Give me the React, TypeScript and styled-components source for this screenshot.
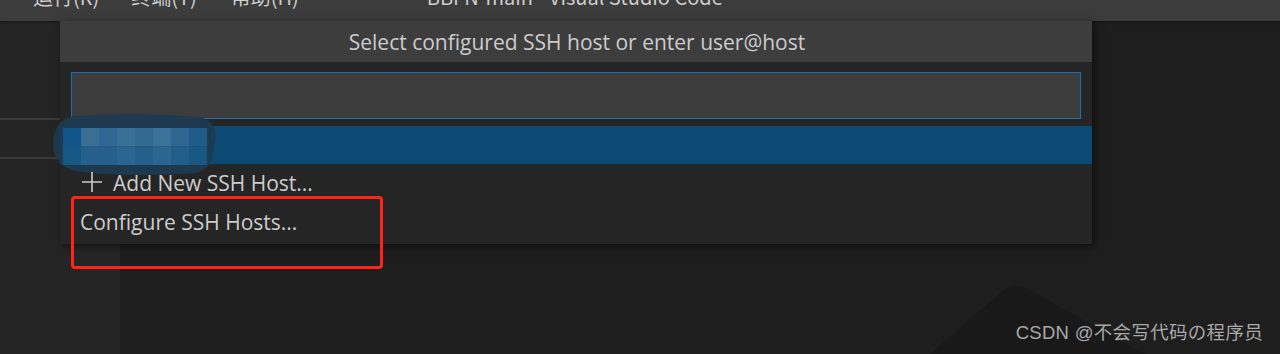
import styled, { createGlobalStyle } from "styled-components";

const Global = createGlobalStyle`
  html, body {
    margin: 0;
    padding: 0;
    background: #1e1e1e;
    overflow: hidden;
  }
`;

const Window = styled.div`
  position: relative;
  width: 1280px;
  height: 354px;
  display: grid;
  grid-template-rows: 21px 1fr;
  font-family: "Open Sans", "Noto Sans", sans-serif;
  overflow: hidden;
`;

const TitleBar = styled.div`
  background: #3c3c3c;
  display: flex;
  overflow: hidden;
  color: #cccccc;
  font-family: "Noto Sans CJK SC", "Open Sans", sans-serif;
  font-size: 20px;
  line-height: 20px;
  box-shadow: 0 1px 3px rgba(0, 0, 0, 0.4);
  z-index: 1;
`;

const MenuItem = styled.span<{ $gap: number }>`
  margin-top: -13px;
  margin-left: ${(p) => p.$gap}px;
  white-space: nowrap;
`;

const Body = styled.div`
  display: grid;
  grid-template-columns: 120px 1fr;
`;

const Sidebar = styled.div`
  background: #252526;
  display: flex;
  flex-direction: column;
  padding-top: 97px;
`;

const SideRow = styled.div`
  height: 37px;
  border-top: 2px solid #3a3a3a;
`;

const Editor = styled.div`
  position: relative;
  background: #1e1e1e;
`;

const LogoShape = styled.svg`
  position: absolute;
  left: 810px;
  bottom: 0;
`;

const QuickPick = styled.div`
  position: absolute;
  left: 60px;
  top: 21px;
  width: 1032px;
  height: 223px;
  background: #252526;
  box-shadow: 2px 2px 8px rgba(0, 0, 0, 0.55);
  display: flex;
  flex-direction: column;
  z-index: 2;
`;

const Header = styled.div`
  height: 41px;
  background: #3d3d3d;
  color: #cccccc;
  font-size: 21px;
  display: flex;
  align-items: center;
  justify-content: center;
  padding-left: 2px;
`;

const InputBox = styled.div`
  margin: 10px 11px 0 11px;
  height: 45px;
  background: #3c3c3c;
  border: 1px solid #1a70b3;
`;

const List = styled.div`
  margin-top: 7px;
  display: flex;
  flex-direction: column;
`;

const Row = styled.div<{ $selected?: boolean }>`
  position: relative;
  height: ${(p) => (p.$selected ? 38 : 37)}px;
  background: ${(p) => (p.$selected ? "#0b4a73" : "transparent")};
  display: flex;
  align-items: center;
  gap: 11px;
  padding-left: ${(p) => (p.$selected ? 20 : 22)}px;
  color: #cccccc;
  font-size: 21px;
  white-space: nowrap;
`;

const ConfigureRow = styled(Row)`
  padding-left: 20px;
  padding-top: 2px;
`;

const Redacted = styled.svg`
  position: absolute;
  left: -8px;
  top: -13px;
`;

const Plus = styled.svg`
  flex: none;
  margin-top: -1px;
`;

const Annotation = styled.div`
  position: absolute;
  left: 71px;
  top: 196px;
  width: 306px;
  height: 67px;
  border: 3px solid #ff2416;
  border-radius: 4px;
  z-index: 3;
`;

const Watermark = styled.div`
  position: absolute;
  right: 17px;
  bottom: 10px;
  color: #a8a8a8;
  font-family: "Liberation Sans", "Noto Sans CJK SC", sans-serif;
  font-size: 18.5px;
  letter-spacing: 0.3px;
  z-index: 3;
`;

const pixels = [
  ["#12558a", "#3a6f95", "#2f6892", "#3a7097", "#326a92", "#3b7299", "#2d6690", "#1f5c89"],
  ["#165886", "#265f8a", "#24608b", "#2b6590", "#24608b", "#2b6590", "#215e89", "#195784"],
];

export default function App() {
  return (
    <Window>
      <Global />
      <TitleBar>
        <MenuItem $gap={33}>运行(R)</MenuItem>
        <MenuItem $gap={32}>终端(T)</MenuItem>
        <MenuItem $gap={34}>帮助(H)</MenuItem>
        <MenuItem $gap={128}>BBFN-main - Visual Studio Code</MenuItem>
      </TitleBar>
      <Body>
        <Sidebar>
          <SideRow />
          <SideRow />
        </Sidebar>
        <Editor>
          <LogoShape width="220" height="70" viewBox="0 0 220 70">
            <path d="M0 70 L74 6 Q85 -2 98 5 L215 70 Z" fill="#191919" />
          </LogoShape>
        </Editor>
      </Body>

      <QuickPick>
        <Header>Select configured SSH host or enter user@host</Header>
        <InputBox />
        <List>
          <Row $selected>
            <Redacted width="168" height="63" viewBox="0 0 168 63">
              <path
                d="M22 3 Q90 -2 152 5 Q168 14 162 32 Q163 56 142 60 Q70 65 22 58 Q0 50 1 30 Q2 7 22 3 Z"
                fill="#1e3a50"
                opacity="0.95"
              />
              {pixels.map((line, r) =>
                line.map((c, i) => (
                  <rect key={`${r}-${i}`} x={11 + i * 18} y={15 + r * 18.5} width="18" height="18.5" fill={c} />
                ))
              )}
            </Redacted>
          </Row>
          <Row>
            <Plus width="20" height="20" viewBox="0 0 20 20">
              <path d="M10 0 V20 M0 10 H20" stroke="#cccccc" strokeWidth="1.6" />
            </Plus>
            Add New SSH Host...
          </Row>
          <ConfigureRow>Configure SSH Hosts...</ConfigureRow>
        </List>
      </QuickPick>

      <Annotation />
      <Watermark>CSDN @不会写代码の程序员</Watermark>
    </Window>
  );
}
